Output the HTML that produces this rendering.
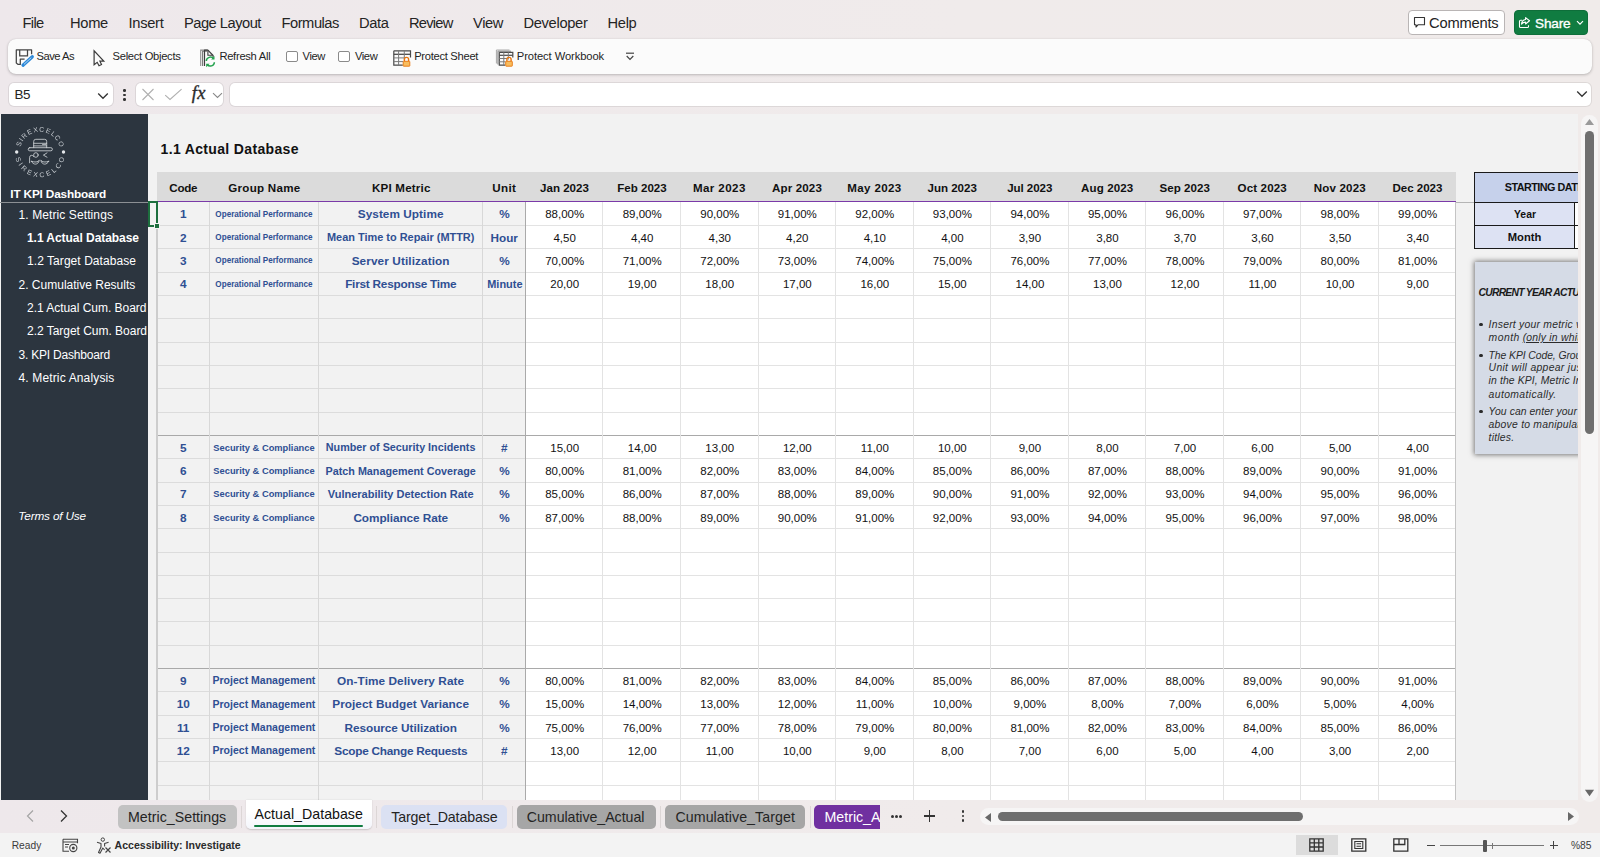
<!DOCTYPE html>
<html lang="en"><head><meta charset="utf-8"><title>IT KPI Dashboard - Actual Database</title>
<style>
*{margin:0;padding:0;box-sizing:content-box}
html,body{width:1600px;height:857px;overflow:hidden}
body{background:linear-gradient(90deg,#eee8eb,#f0ebeb 60%,#f0ebea);font-family:"Liberation Sans",sans-serif;position:relative;-webkit-font-smoothing:antialiased}
.t{position:absolute;white-space:nowrap;line-height:1;display:block}
.r{position:absolute}
.a{position:absolute;overflow:visible}
#sheet{position:absolute;left:0;top:114px;width:1577.800px;height:685.800px;background:#f2f2f2;overflow:hidden}
</style></head>
<body>
<span class="t" style="left:22.50px;top:16.00px;font-size:14.70px;color:#242424;letter-spacing:-0.672px;">File</span>
<span class="t" style="left:70.00px;top:16.00px;font-size:14.70px;color:#242424;letter-spacing:-0.303px;">Home</span>
<span class="t" style="left:128.50px;top:16.00px;font-size:14.70px;color:#242424;letter-spacing:-0.294px;">Insert</span>
<span class="t" style="left:184.00px;top:16.00px;font-size:14.70px;color:#242424;letter-spacing:-0.505px;">Page Layout</span>
<span class="t" style="left:281.50px;top:16.00px;font-size:14.70px;color:#242424;letter-spacing:-0.471px;">Formulas</span>
<span class="t" style="left:359.00px;top:16.00px;font-size:14.70px;color:#242424;letter-spacing:-0.388px;">Data</span>
<span class="t" style="left:409.00px;top:16.00px;font-size:14.70px;color:#242424;letter-spacing:-0.783px;">Review</span>
<span class="t" style="left:473.00px;top:16.00px;font-size:14.70px;color:#242424;letter-spacing:-0.400px;">View</span>
<span class="t" style="left:523.50px;top:16.00px;font-size:14.70px;color:#242424;letter-spacing:-0.334px;">Developer</span>
<span class="t" style="left:607.50px;top:16.00px;font-size:14.70px;color:#242424;letter-spacing:-0.308px;">Help</span>
<div class="r" style="left:1407.50px;top:10.00px;width:97.50px;height:25.00px;background:#ffffff;border:1px solid #b9b5b5;border-radius:4px;box-sizing:border-box;"></div>
<svg class="a" style="left:1413px;top:16px" width="13" height="13" viewBox="0 0 13 13"><path d="M1.5 1.5h10v7.2h-6.3l-2.2 2.3v-2.3h-1.5z" fill="none" stroke="#333" stroke-width="1.1" stroke-linejoin="round"/></svg>
<span class="t" style="left:1429.00px;top:16.00px;font-size:14.70px;color:#242424;letter-spacing:-0.196px;">Comments</span>
<div class="r" style="left:1513.50px;top:10.00px;width:74.50px;height:25.00px;background:#107c41;border-radius:4px;border:1px solid #0e6e3a;box-sizing:border-box;"></div>
<svg class="a" style="left:1518px;top:15.5px" width="13" height="13" viewBox="0 0 13 13"><path d="M4.2 4.2H2.6a1.1 1.1 0 0 0-1.1 1.1v5.1a1.1 1.1 0 0 0 1.1 1.1h6.8a1.1 1.1 0 0 0 1.1-1.1V9.2" fill="none" stroke="#fff" stroke-width="1.1"/><path d="M7.6 1.6l3.9 3.2-3.9 3.2V6.1c-2 0-3.2.6-4.1 2 .2-2.600 1.500-4.300 4.100-4.600z" fill="none" stroke="#fff" stroke-width="1.1" stroke-linejoin="round"/></svg>
<span class="t" style="left:1535.00px;top:17.00px;font-size:13.60px;color:#ffffff;letter-spacing:-0.159px;-webkit-text-stroke:0.35px #fff;">Share</span>
<svg class="a" style="left:1576px;top:20px" width="8" height="6" viewBox="0 0 8 6"><path d="M1 1.2l3 3 3-3" fill="none" stroke="#fff" stroke-width="1.2"/></svg>
<div class="r" style="left:8.00px;top:38.50px;width:1584.00px;height:35.00px;background:#fbfbfb;border-radius:8px;box-shadow:0 1px 3px rgba(0,0,0,.22),0 0 1px rgba(0,0,0,.15);"></div>
<svg class="a" style="left:15px;top:47.5px" width="20" height="20" viewBox="0 0 20 20">
<path d="M16.600 6.200V1.900H1.300V15.100L3.100 16.400H5.300V11.100H9.600" fill="none" stroke="#444" stroke-width="1.25" stroke-linejoin="round"/>
<path d="M4.700 1.900V7.800H12.500V1.900" fill="none" stroke="#444" stroke-width="1.250"/>
<path d="M8 17.200L17.300 8.700" fill="none" stroke="#2b88d8" stroke-width="3.200" stroke-linecap="round"/>
<path d="M9.200 16.100L16 9.900" fill="none" stroke="#d6ebfa" stroke-width=".8" stroke-linecap="round"/></svg>
<span class="t" style="left:36.60px;top:51.00px;font-size:11.20px;color:#242424;letter-spacing:-0.528px;">Save As</span>
<svg class="a" style="left:92px;top:49.500px" width="14" height="17" viewBox="0 0 14 17"><path d="M2.100 .8V14.700L5.200 12.300 7 15.700 9.500 14.500 7.900 11.200H11.800z" fill="#fbfbfb" stroke="#3a3a3a" stroke-width="1.200" stroke-linejoin="miter"/></svg>
<span class="t" style="left:112.60px;top:51.00px;font-size:11.20px;color:#242424;letter-spacing:-0.301px;">Select Objects</span>
<svg class="a" style="left:199px;top:47.500px" width="18" height="20" viewBox="0 0 18 20">
<path d="M1.700 17.900V2.100H8.600" fill="none" stroke="#8e8e8e" stroke-width="1.100"/>
<path d="M3.600 17.900V3.300H8" fill="none" stroke="#777" stroke-width="1.100"/>
<path d="M5.500 17.900V2.100H8.900L14.100 7.500V9" fill="none" stroke="#3d3d3d" stroke-width="1.200" stroke-linejoin="round"/>
<path d="M8.900 2.400V7.300H13.600" fill="none" stroke="#3d3d3d" stroke-width="1.100"/>
<path d="M7.300 13a4.100 4.100 0 0 1 7.300-2.300M15.400 14.200a4.100 4.100 0 0 1-7.300 2.300" fill="none" stroke="#23a24d" stroke-width="1.500"/>
<path d="M15.500 8v3.400h-3.400z" fill="#23a24d"/><path d="M7.200 19.200v-3.400h3.400z" fill="#23a24d"/></svg>
<span class="t" style="left:219.40px;top:51.00px;font-size:11.20px;color:#242424;letter-spacing:-0.287px;">Refresh All</span>
<div class="r" style="left:286.00px;top:50.50px;width:11.50px;height:11.50px;background:#fff;border:1px solid #8a8a8a;border-radius:2px;box-sizing:border-box;"></div>
<span class="t" style="left:302.60px;top:51.00px;font-size:11.20px;color:#242424;letter-spacing:-0.444px;">View</span>
<div class="r" style="left:338.40px;top:50.50px;width:11.50px;height:11.50px;background:#fff;border:1px solid #8a8a8a;border-radius:2px;box-sizing:border-box;"></div>
<span class="t" style="left:355.00px;top:51.00px;font-size:11.20px;color:#242424;letter-spacing:-0.444px;">View</span>
<svg class="a" style="left:392.5px;top:48.500px" width="19" height="19" viewBox="0 0 19 19"><path d="M.8 1.800H17.500V8.500M.8 1.800V16.200H9.800" fill="none" stroke="#4a4a4a" stroke-width="1.200"/>
<path d="M.8 5.300H17.500" fill="none" stroke="#4a4a4a" stroke-width="1.300"/>
<path d="M.8 8.900H12M.8 12.600H10M5.600 1.800V16.200M11.300 1.800V10.500" fill="none" stroke="#7a7a7a" stroke-width="1"/><path d="M11.4 12.500v-2a2.100 2.100 0 0 1 4.200 0v2" fill="none" stroke="#e8760f" stroke-width="1.400"/>
<rect x="10.2" y="12.300" width="6.600" height="4.900" rx=".5" fill="#f8bd5e" stroke="#e8760f" stroke-width=".9"/></svg>
<span class="t" style="left:414.20px;top:51.00px;font-size:11.20px;color:#242424;letter-spacing:-0.297px;">Protect Sheet</span>
<svg class="a" style="left:494.5px;top:48.500px" width="19" height="19" viewBox="0 0 19 19"><path d="M1.400 14.500V1H14.500" fill="none" stroke="#a8a8a8" stroke-width="1"/><path d="M2.900 15.500V2.200H16" fill="none" stroke="#8a8a8a" stroke-width="1"/>
<path d="M4.300 3.300H17.800V8.500M4.300 3.300V16.200H10.200" fill="none" stroke="#4a4a4a" stroke-width="1.200"/>
<path d="M4.300 6.300H17.800" fill="none" stroke="#4a4a4a" stroke-width="1.200"/>
<path d="M4.300 9.500H12.500M4.300 12.800H10.500M8.800 3.300V16.200M13.300 3.300V10.500" fill="none" stroke="#7a7a7a" stroke-width="1"/><path d="M11.9 12.500v-2a2.100 2.100 0 0 1 4.200 0v2" fill="none" stroke="#e8760f" stroke-width="1.400"/>
<rect x="10.7" y="12.300" width="6.600" height="4.900" rx=".5" fill="#f8bd5e" stroke="#e8760f" stroke-width=".9"/></svg>
<span class="t" style="left:516.80px;top:51.00px;font-size:11.20px;color:#242424;letter-spacing:-0.088px;">Protect Workbook</span>
<svg class="a" style="left:624.5px;top:52px" width="10" height="9" viewBox="0 0 10 9"><path d="M1 1.200h8" stroke="#444" stroke-width="1.200"/><path d="M1.700 4l3.300 3.300L8.300 4" fill="none" stroke="#444" stroke-width="1.200"/></svg>
<div class="r" style="left:9.30px;top:83.40px;width:103.60px;height:22.40px;background:#ffffff;border-radius:5px;box-shadow:0 0 0 1px rgba(0,0,0,.08);"></div>
<span class="t" style="left:14.60px;top:88.00px;font-size:13.40px;color:#242424;letter-spacing:-0.495px;">B5</span>
<svg class="a" style="left:97px;top:92px" width="12" height="8" viewBox="0 0 12 8"><path d="M1.200 1.500l4.800 4.800 4.800-4.800" fill="none" stroke="#333" stroke-width="1.300"/></svg>
<div class="r" style="left:123.30px;top:89.30px;width:2.50px;height:2.50px;background:#333;border-radius:50%;"></div>
<div class="r" style="left:123.30px;top:93.70px;width:2.50px;height:2.50px;background:#333;border-radius:50%;"></div>
<div class="r" style="left:123.30px;top:98.10px;width:2.50px;height:2.50px;background:#333;border-radius:50%;"></div>
<div class="r" style="left:136.30px;top:83.40px;width:86.90px;height:22.40px;background:#ffffff;border-radius:5px;box-shadow:0 0 0 1px rgba(0,0,0,.08);"></div>
<svg class="a" style="left:141px;top:88px" width="14" height="13" viewBox="0 0 14 13"><path d="M1.500 1l11 11M12.500 1l-11 11" stroke="#b0b0b0" stroke-width="1.100"/></svg>
<svg class="a" style="left:164px;top:88px" width="19" height="13" viewBox="0 0 19 13"><path d="M1.200 7.200l4.800 4.300L17.600 1.200" fill="none" stroke="#b0b0b0" stroke-width="1.100"/></svg>
<span class="t" style="left:191.80px;top:84.00px;font-size:18.50px;font-style:italic;color:#2b2b2b;font-family:'Liberation Serif',serif;-webkit-text-stroke:.35px #2b2b2b;letter-spacing:.4px;">fx</span>
<svg class="a" style="left:211.500px;top:92px" width="11" height="7" viewBox="0 0 11 7"><path d="M1 1.200l4.500 4.300L10 1.200" fill="none" stroke="#888" stroke-width="1.100"/></svg>
<div class="r" style="left:229.60px;top:83.40px;width:1361.00px;height:22.40px;background:#ffffff;border-radius:5px;box-shadow:0 0 0 1px rgba(0,0,0,.08);"></div>
<svg class="a" style="left:1575.500px;top:89.500px" width="12" height="8" viewBox="0 0 12 8"><path d="M1.200 1.500l4.800 4.800 4.800-4.800" fill="none" stroke="#333" stroke-width="1.300"/></svg>
<div id="sheet">
<div class="r" style="left:1.00px;top:0.00px;width:147.20px;height:686.00px;background:#2c353f;"></div>
<div class="r" style="left:0.00px;top:88.00px;width:149.00px;height:1.00px;background:#8c9094;"></div>
<svg class="a" style="left:9.700px;top:7.800px;will-change:transform" width="60" height="60" viewBox="-30 -30 60 60">
<defs><path id="arcT" d="M-19.65 -5.08A20.30 20.30 0 0 1 19.65 -5.08"/><path id="arcB" d="M-24.40 6.31A25.20 25.20 0 0 0 24.40 6.31"/></defs>
<g fill="#c8cdd2" font-family="'Liberation Sans',sans-serif" font-size="6.8">
<text letter-spacing="1.07"><textPath href="#arcT">SIREXCELCO</textPath></text>
<text letter-spacing="2.51"><textPath href="#arcB">SIREXCELCO</textPath></text></g>
<circle cx="-23.300" cy="0" r="1.700" fill="#e4e7ea"/><circle cx="23.500" cy="0" r="1.700" fill="#e4e7ea"/>
<g fill="none" stroke="#cdd2d6" stroke-width=".85" stroke-linecap="round" stroke-linejoin="round">
<path d="M-6.300 -4.300v-6.300a2.100 2.100 0 0 1 2.100-2.100h8.800a2.100 2.100 0 0 1 2.100 2.100v6.300"/>
<path d="M-6.300 -6.100h13M-6.300 -8.700h13M2.500 -7.400h3.200"/>
<rect x="-11.800" y="-4.300" width="24.200" height="3.100" rx="1.550"/>
<circle cx="-4.100" cy="3" r="2.300"/>
<path d="M-10.400 10.800V5.400a2.100 2.100 0 0 1 4-0.900"/>
<path d="M7 0.900L3.400 3.100l3.600 2.100"/>
<path d="M-8.600 9.300c1.800 4 6.800 4 7.900-1.100-1.300 2-4.400 2.400-7.900 1.100z"/>
<path d="M8.700 9.300c-1.800 4-6.800 4-7.900-1.100 1.300 2 4.400 2.400 7.900 1.100z"/>
</g></svg>
<span class="t" style="left:10.30px;top:75.00px;font-size:11.80px;font-weight:bold;color:#ffffff;letter-spacing:-0.166px;">IT KPI Dashboard</span>
<span class="t" style="left:18.50px;top:95.00px;font-size:12.00px;color:#ffffff;letter-spacing:0.100px;">1. Metric Settings</span>
<span class="t" style="left:27.00px;top:118.00px;font-size:12.00px;font-weight:bold;color:#ffffff;letter-spacing:-0.050px;">1.1 Actual Database</span>
<span class="t" style="left:27.00px;top:141.00px;font-size:12.00px;color:#ffffff;letter-spacing:0.060px;">1.2 Target Database</span>
<span class="t" style="left:18.50px;top:165.00px;font-size:12.00px;color:#ffffff;letter-spacing:0.004px;">2. Cumulative Results</span>
<span class="t" style="left:27.00px;top:188.00px;font-size:12.00px;color:#ffffff;letter-spacing:-0.032px;">2.1 Actual Cum. Board</span>
<span class="t" style="left:27.00px;top:211.00px;font-size:12.00px;color:#ffffff;letter-spacing:-0.024px;">2.2 Target Cum. Board</span>
<span class="t" style="left:18.50px;top:235.00px;font-size:12.00px;color:#ffffff;letter-spacing:-0.202px;">3. KPI Dashboard</span>
<span class="t" style="left:18.50px;top:258.00px;font-size:12.00px;color:#ffffff;letter-spacing:0.146px;">4. Metric Analysis</span>
<span class="t" style="left:18.30px;top:397.00px;font-size:11.80px;font-style:italic;color:#ffffff;letter-spacing:-0.169px;">Terms of Use</span>
<span class="t" style="left:160.60px;top:28.00px;font-size:14.00px;font-weight:bold;color:#111;letter-spacing:0.339px;">1.1 Actual Database</span>
<div class="r" style="left:157.40px;top:58.00px;width:1298.48px;height:29.30px;background:#dbdbdb;"></div>
<div class="r" style="left:157.40px;top:88.00px;width:367.90px;height:598.00px;background:#f2f2f2;"></div>
<div class="r" style="left:525.30px;top:88.00px;width:930.58px;height:598.00px;background:#ffffff;"></div>
<div class="r" style="left:157.40px;top:110.83px;width:367.90px;height:1.00px;background:#dcdcdc;"></div>
<div class="r" style="left:525.30px;top:110.83px;width:930.58px;height:1.00px;background:#e3e3e3;"></div>
<div class="r" style="left:157.40px;top:134.17px;width:367.90px;height:1.00px;background:#dcdcdc;"></div>
<div class="r" style="left:525.30px;top:134.17px;width:930.58px;height:1.00px;background:#e3e3e3;"></div>
<div class="r" style="left:157.40px;top:157.50px;width:367.90px;height:1.00px;background:#dcdcdc;"></div>
<div class="r" style="left:525.30px;top:157.50px;width:930.58px;height:1.00px;background:#e3e3e3;"></div>
<div class="r" style="left:157.40px;top:180.83px;width:367.90px;height:1.00px;background:#dcdcdc;"></div>
<div class="r" style="left:525.30px;top:180.83px;width:930.58px;height:1.00px;background:#e3e3e3;"></div>
<div class="r" style="left:157.40px;top:204.16px;width:367.90px;height:1.00px;background:#dcdcdc;"></div>
<div class="r" style="left:525.30px;top:204.16px;width:930.58px;height:1.00px;background:#e3e3e3;"></div>
<div class="r" style="left:157.40px;top:227.50px;width:367.90px;height:1.00px;background:#dcdcdc;"></div>
<div class="r" style="left:525.30px;top:227.50px;width:930.58px;height:1.00px;background:#e3e3e3;"></div>
<div class="r" style="left:157.40px;top:250.83px;width:367.90px;height:1.00px;background:#dcdcdc;"></div>
<div class="r" style="left:525.30px;top:250.83px;width:930.58px;height:1.00px;background:#e3e3e3;"></div>
<div class="r" style="left:157.40px;top:274.16px;width:367.90px;height:1.00px;background:#dcdcdc;"></div>
<div class="r" style="left:525.30px;top:274.16px;width:930.58px;height:1.00px;background:#e3e3e3;"></div>
<div class="r" style="left:157.40px;top:297.50px;width:367.90px;height:1.00px;background:#dcdcdc;"></div>
<div class="r" style="left:525.30px;top:297.50px;width:930.58px;height:1.00px;background:#e3e3e3;"></div>
<div class="r" style="left:157.40px;top:320.83px;width:1298.48px;height:1.00px;background:#a9a9a9;"></div>
<div class="r" style="left:157.40px;top:344.16px;width:367.90px;height:1.00px;background:#dcdcdc;"></div>
<div class="r" style="left:525.30px;top:344.16px;width:930.58px;height:1.00px;background:#e3e3e3;"></div>
<div class="r" style="left:157.40px;top:367.50px;width:367.90px;height:1.00px;background:#dcdcdc;"></div>
<div class="r" style="left:525.30px;top:367.50px;width:930.58px;height:1.00px;background:#e3e3e3;"></div>
<div class="r" style="left:157.40px;top:390.83px;width:367.90px;height:1.00px;background:#dcdcdc;"></div>
<div class="r" style="left:525.30px;top:390.83px;width:930.58px;height:1.00px;background:#e3e3e3;"></div>
<div class="r" style="left:157.40px;top:414.16px;width:367.90px;height:1.00px;background:#dcdcdc;"></div>
<div class="r" style="left:525.30px;top:414.16px;width:930.58px;height:1.00px;background:#e3e3e3;"></div>
<div class="r" style="left:157.40px;top:437.50px;width:367.90px;height:1.00px;background:#dcdcdc;"></div>
<div class="r" style="left:525.30px;top:437.50px;width:930.58px;height:1.00px;background:#e3e3e3;"></div>
<div class="r" style="left:157.40px;top:460.83px;width:367.90px;height:1.00px;background:#dcdcdc;"></div>
<div class="r" style="left:525.30px;top:460.83px;width:930.58px;height:1.00px;background:#e3e3e3;"></div>
<div class="r" style="left:157.40px;top:484.16px;width:367.90px;height:1.00px;background:#dcdcdc;"></div>
<div class="r" style="left:525.30px;top:484.16px;width:930.58px;height:1.00px;background:#e3e3e3;"></div>
<div class="r" style="left:157.40px;top:507.49px;width:367.90px;height:1.00px;background:#dcdcdc;"></div>
<div class="r" style="left:525.30px;top:507.49px;width:930.58px;height:1.00px;background:#e3e3e3;"></div>
<div class="r" style="left:157.40px;top:530.83px;width:367.90px;height:1.00px;background:#dcdcdc;"></div>
<div class="r" style="left:525.30px;top:530.83px;width:930.58px;height:1.00px;background:#e3e3e3;"></div>
<div class="r" style="left:157.40px;top:554.16px;width:1298.48px;height:1.00px;background:#a9a9a9;"></div>
<div class="r" style="left:157.40px;top:577.49px;width:367.90px;height:1.00px;background:#dcdcdc;"></div>
<div class="r" style="left:525.30px;top:577.49px;width:930.58px;height:1.00px;background:#e3e3e3;"></div>
<div class="r" style="left:157.40px;top:600.83px;width:367.90px;height:1.00px;background:#dcdcdc;"></div>
<div class="r" style="left:525.30px;top:600.83px;width:930.58px;height:1.00px;background:#e3e3e3;"></div>
<div class="r" style="left:157.40px;top:624.16px;width:367.90px;height:1.00px;background:#dcdcdc;"></div>
<div class="r" style="left:525.30px;top:624.16px;width:930.58px;height:1.00px;background:#e3e3e3;"></div>
<div class="r" style="left:157.40px;top:647.49px;width:367.90px;height:1.00px;background:#dcdcdc;"></div>
<div class="r" style="left:525.30px;top:647.49px;width:930.58px;height:1.00px;background:#e3e3e3;"></div>
<div class="r" style="left:157.40px;top:670.82px;width:367.90px;height:1.00px;background:#dcdcdc;"></div>
<div class="r" style="left:525.30px;top:670.82px;width:930.58px;height:1.00px;background:#e3e3e3;"></div>
<div class="r" style="left:156.20px;top:88.00px;width:1.80px;height:598.00px;background:#cdcdcd;"></div>
<div class="r" style="left:209.00px;top:88.00px;width:1.00px;height:598.00px;background:#d8d8d8;"></div>
<div class="r" style="left:317.80px;top:88.00px;width:1.00px;height:598.00px;background:#d8d8d8;"></div>
<div class="r" style="left:482.30px;top:88.00px;width:1.00px;height:598.00px;background:#d8d8d8;"></div>
<div class="r" style="left:524.80px;top:88.00px;width:1.00px;height:598.00px;background:#aaaaaa;"></div>
<div class="r" style="left:602.44px;top:88.00px;width:1.00px;height:598.00px;background:#e3e3e3;"></div>
<div class="r" style="left:679.98px;top:88.00px;width:1.00px;height:598.00px;background:#e3e3e3;"></div>
<div class="r" style="left:757.52px;top:88.00px;width:1.00px;height:598.00px;background:#e3e3e3;"></div>
<div class="r" style="left:835.06px;top:88.00px;width:1.00px;height:598.00px;background:#e3e3e3;"></div>
<div class="r" style="left:912.60px;top:88.00px;width:1.00px;height:598.00px;background:#e3e3e3;"></div>
<div class="r" style="left:990.14px;top:88.00px;width:1.00px;height:598.00px;background:#e3e3e3;"></div>
<div class="r" style="left:1067.68px;top:88.00px;width:1.00px;height:598.00px;background:#e3e3e3;"></div>
<div class="r" style="left:1145.22px;top:88.00px;width:1.00px;height:598.00px;background:#e3e3e3;"></div>
<div class="r" style="left:1222.76px;top:88.00px;width:1.00px;height:598.00px;background:#e3e3e3;"></div>
<div class="r" style="left:1300.30px;top:88.00px;width:1.00px;height:598.00px;background:#e3e3e3;"></div>
<div class="r" style="left:1377.84px;top:88.00px;width:1.00px;height:598.00px;background:#e3e3e3;"></div>
<div class="r" style="left:1455.38px;top:88.00px;width:1.00px;height:598.00px;background:#c4c4c4;"></div>
<div class="r" style="left:157.40px;top:86.90px;width:1298.48px;height:1.30px;background:#7a3aa8;"></div>
<div class="r" style="left:1455.88px;top:88.00px;width:18.52px;height:1.00px;background:#b5b5b5;"></div>
<span class="t" style="left:169.33px;top:68.00px;font-size:11.60px;font-weight:bold;color:#111;letter-spacing:-0.250px;">Code</span>
<span class="t" style="left:228.33px;top:68.00px;font-size:11.60px;font-weight:bold;color:#111;letter-spacing:0.249px;">Group Name</span>
<span class="t" style="left:371.90px;top:68.00px;font-size:11.60px;font-weight:bold;color:#111;letter-spacing:0.207px;">KPI Metric</span>
<span class="t" style="left:492.34px;top:68.00px;font-size:11.60px;font-weight:bold;color:#111;letter-spacing:0.313px;">Unit</span>
<span class="t" style="left:540.10px;top:69.00px;font-size:11.55px;font-weight:bold;color:#111;letter-spacing:-0.007px;">Jan 2023</span>
<span class="t" style="left:617.31px;top:69.00px;font-size:11.55px;font-weight:bold;color:#111;letter-spacing:-0.005px;">Feb 2023</span>
<span class="t" style="left:692.94px;top:69.00px;font-size:11.55px;font-weight:bold;color:#111;letter-spacing:0.420px;">Mar 2023</span>
<span class="t" style="left:772.01px;top:69.00px;font-size:11.55px;font-weight:bold;color:#111;letter-spacing:0.151px;">Apr 2023</span>
<span class="t" style="left:847.24px;top:69.00px;font-size:11.55px;font-weight:bold;color:#111;letter-spacing:0.378px;">May 2023</span>
<span class="t" style="left:927.47px;top:69.00px;font-size:11.55px;font-weight:bold;color:#111;letter-spacing:-0.005px;">Jun 2023</span>
<span class="t" style="left:1007.25px;top:69.00px;font-size:11.55px;font-weight:bold;color:#111;letter-spacing:-0.074px;">Jul 2023</span>
<span class="t" style="left:1081.10px;top:69.00px;font-size:11.55px;font-weight:bold;color:#111;letter-spacing:0.106px;">Aug 2023</span>
<span class="t" style="left:1159.46px;top:69.00px;font-size:11.55px;font-weight:bold;color:#111;letter-spacing:0.064px;">Sep 2023</span>
<span class="t" style="left:1237.55px;top:69.00px;font-size:11.55px;font-weight:bold;color:#111;letter-spacing:0.155px;">Oct 2023</span>
<span class="t" style="left:1313.68px;top:69.00px;font-size:11.55px;font-weight:bold;color:#111;letter-spacing:0.184px;">Nov 2023</span>
<span class="t" style="left:1392.42px;top:69.00px;font-size:11.55px;font-weight:bold;color:#111;letter-spacing:-0.012px;">Dec 2023</span>
<span class="t" style="left:179.92px;top:95.00px;font-size:11.80px;font-weight:bold;color:#2f4f93;">1</span>
<span class="t" style="left:215.37px;top:97.00px;font-size:8.14px;font-weight:bold;color:#2f4f93;">Operational Performance</span>
<span class="t" style="left:357.78px;top:95.00px;font-size:11.80px;font-weight:bold;color:#2f4f93;letter-spacing:0.042px;">System Uptime</span>
<span class="t" style="left:499.15px;top:95.00px;font-size:11.80px;font-weight:bold;color:#2f4f93;">%</span>
<span class="t" style="left:545.17px;top:95.00px;font-size:11.50px;color:#111111;">88,00%</span>
<span class="t" style="left:622.71px;top:95.00px;font-size:11.50px;color:#111111;">89,00%</span>
<span class="t" style="left:700.25px;top:95.00px;font-size:11.50px;color:#111111;">90,00%</span>
<span class="t" style="left:777.79px;top:95.00px;font-size:11.50px;color:#111111;">91,00%</span>
<span class="t" style="left:855.33px;top:95.00px;font-size:11.50px;color:#111111;">92,00%</span>
<span class="t" style="left:932.87px;top:95.00px;font-size:11.50px;color:#111111;">93,00%</span>
<span class="t" style="left:1010.41px;top:95.00px;font-size:11.50px;color:#111111;">94,00%</span>
<span class="t" style="left:1087.95px;top:95.00px;font-size:11.50px;color:#111111;">95,00%</span>
<span class="t" style="left:1165.49px;top:95.00px;font-size:11.50px;color:#111111;">96,00%</span>
<span class="t" style="left:1243.03px;top:95.00px;font-size:11.50px;color:#111111;">97,00%</span>
<span class="t" style="left:1320.57px;top:95.00px;font-size:11.50px;color:#111111;">98,00%</span>
<span class="t" style="left:1398.11px;top:95.00px;font-size:11.50px;color:#111111;">99,00%</span>
<span class="t" style="left:179.92px;top:119.00px;font-size:11.80px;font-weight:bold;color:#2f4f93;">2</span>
<span class="t" style="left:215.37px;top:120.00px;font-size:8.14px;font-weight:bold;color:#2f4f93;">Operational Performance</span>
<span class="t" style="left:326.95px;top:118.00px;font-size:10.94px;font-weight:bold;color:#2f4f93;">Mean Time to Repair (MTTR)</span>
<span class="t" style="left:490.51px;top:118.00px;font-size:11.74px;font-weight:bold;color:#2f4f93;">Hour</span>
<span class="t" style="left:553.48px;top:119.00px;font-size:11.50px;color:#111111;">4,50</span>
<span class="t" style="left:631.02px;top:119.00px;font-size:11.50px;color:#111111;">4,40</span>
<span class="t" style="left:708.56px;top:119.00px;font-size:11.50px;color:#111111;">4,30</span>
<span class="t" style="left:786.10px;top:119.00px;font-size:11.50px;color:#111111;">4,20</span>
<span class="t" style="left:863.64px;top:119.00px;font-size:11.50px;color:#111111;">4,10</span>
<span class="t" style="left:941.18px;top:119.00px;font-size:11.50px;color:#111111;">4,00</span>
<span class="t" style="left:1018.72px;top:119.00px;font-size:11.50px;color:#111111;">3,90</span>
<span class="t" style="left:1096.26px;top:119.00px;font-size:11.50px;color:#111111;">3,80</span>
<span class="t" style="left:1173.80px;top:119.00px;font-size:11.50px;color:#111111;">3,70</span>
<span class="t" style="left:1251.34px;top:119.00px;font-size:11.50px;color:#111111;">3,60</span>
<span class="t" style="left:1328.88px;top:119.00px;font-size:11.50px;color:#111111;">3,50</span>
<span class="t" style="left:1406.42px;top:119.00px;font-size:11.50px;color:#111111;">3,40</span>
<span class="t" style="left:179.92px;top:142.00px;font-size:11.80px;font-weight:bold;color:#2f4f93;">3</span>
<span class="t" style="left:215.37px;top:143.00px;font-size:8.14px;font-weight:bold;color:#2f4f93;">Operational Performance</span>
<span class="t" style="left:351.66px;top:142.00px;font-size:11.80px;font-weight:bold;color:#2f4f93;letter-spacing:0.089px;">Server Utilization</span>
<span class="t" style="left:499.15px;top:142.00px;font-size:11.80px;font-weight:bold;color:#2f4f93;">%</span>
<span class="t" style="left:545.17px;top:142.00px;font-size:11.50px;color:#111111;">70,00%</span>
<span class="t" style="left:622.71px;top:142.00px;font-size:11.50px;color:#111111;">71,00%</span>
<span class="t" style="left:700.25px;top:142.00px;font-size:11.50px;color:#111111;">72,00%</span>
<span class="t" style="left:777.79px;top:142.00px;font-size:11.50px;color:#111111;">73,00%</span>
<span class="t" style="left:855.33px;top:142.00px;font-size:11.50px;color:#111111;">74,00%</span>
<span class="t" style="left:932.87px;top:142.00px;font-size:11.50px;color:#111111;">75,00%</span>
<span class="t" style="left:1010.41px;top:142.00px;font-size:11.50px;color:#111111;">76,00%</span>
<span class="t" style="left:1087.95px;top:142.00px;font-size:11.50px;color:#111111;">77,00%</span>
<span class="t" style="left:1165.49px;top:142.00px;font-size:11.50px;color:#111111;">78,00%</span>
<span class="t" style="left:1243.03px;top:142.00px;font-size:11.50px;color:#111111;">79,00%</span>
<span class="t" style="left:1320.57px;top:142.00px;font-size:11.50px;color:#111111;">80,00%</span>
<span class="t" style="left:1398.11px;top:142.00px;font-size:11.50px;color:#111111;">81,00%</span>
<span class="t" style="left:179.92px;top:165.00px;font-size:11.80px;font-weight:bold;color:#2f4f93;">4</span>
<span class="t" style="left:215.37px;top:167.00px;font-size:8.14px;font-weight:bold;color:#2f4f93;">Operational Performance</span>
<span class="t" style="left:345.17px;top:165.00px;font-size:11.80px;font-weight:bold;color:#2f4f93;letter-spacing:-0.240px;">First Response Time</span>
<span class="t" style="left:487.24px;top:165.00px;font-size:10.96px;font-weight:bold;color:#2f4f93;">Minute</span>
<span class="t" style="left:550.28px;top:165.00px;font-size:11.50px;color:#111111;">20,00</span>
<span class="t" style="left:627.82px;top:165.00px;font-size:11.50px;color:#111111;">19,00</span>
<span class="t" style="left:705.36px;top:165.00px;font-size:11.50px;color:#111111;">18,00</span>
<span class="t" style="left:782.90px;top:165.00px;font-size:11.50px;color:#111111;">17,00</span>
<span class="t" style="left:860.44px;top:165.00px;font-size:11.50px;color:#111111;">16,00</span>
<span class="t" style="left:937.98px;top:165.00px;font-size:11.50px;color:#111111;">15,00</span>
<span class="t" style="left:1015.52px;top:165.00px;font-size:11.50px;color:#111111;">14,00</span>
<span class="t" style="left:1093.06px;top:165.00px;font-size:11.50px;color:#111111;">13,00</span>
<span class="t" style="left:1170.60px;top:165.00px;font-size:11.50px;color:#111111;">12,00</span>
<span class="t" style="left:1248.57px;top:165.00px;font-size:11.50px;color:#111111;">11,00</span>
<span class="t" style="left:1325.68px;top:165.00px;font-size:11.50px;color:#111111;">10,00</span>
<span class="t" style="left:1406.42px;top:165.00px;font-size:11.50px;color:#111111;">9,00</span>
<span class="t" style="left:179.92px;top:329.00px;font-size:11.80px;font-weight:bold;color:#2f4f93;">5</span>
<span class="t" style="left:213.35px;top:330.00px;font-size:9.30px;font-weight:bold;color:#2f4f93;">Security &amp; Compliance</span>
<span class="t" style="left:325.82px;top:328.00px;font-size:10.78px;font-weight:bold;color:#2f4f93;">Number of Security Incidents</span>
<span class="t" style="left:501.12px;top:329.00px;font-size:11.80px;font-weight:bold;color:#2f4f93;">#</span>
<span class="t" style="left:550.28px;top:329.00px;font-size:11.50px;color:#111111;">15,00</span>
<span class="t" style="left:627.82px;top:329.00px;font-size:11.50px;color:#111111;">14,00</span>
<span class="t" style="left:705.36px;top:329.00px;font-size:11.50px;color:#111111;">13,00</span>
<span class="t" style="left:782.90px;top:329.00px;font-size:11.50px;color:#111111;">12,00</span>
<span class="t" style="left:860.87px;top:329.00px;font-size:11.50px;color:#111111;">11,00</span>
<span class="t" style="left:937.98px;top:329.00px;font-size:11.50px;color:#111111;">10,00</span>
<span class="t" style="left:1018.72px;top:329.00px;font-size:11.50px;color:#111111;">9,00</span>
<span class="t" style="left:1096.26px;top:329.00px;font-size:11.50px;color:#111111;">8,00</span>
<span class="t" style="left:1173.80px;top:329.00px;font-size:11.50px;color:#111111;">7,00</span>
<span class="t" style="left:1251.34px;top:329.00px;font-size:11.50px;color:#111111;">6,00</span>
<span class="t" style="left:1328.88px;top:329.00px;font-size:11.50px;color:#111111;">5,00</span>
<span class="t" style="left:1406.42px;top:329.00px;font-size:11.50px;color:#111111;">4,00</span>
<span class="t" style="left:179.92px;top:352.00px;font-size:11.80px;font-weight:bold;color:#2f4f93;">6</span>
<span class="t" style="left:213.35px;top:353.00px;font-size:9.30px;font-weight:bold;color:#2f4f93;">Security &amp; Compliance</span>
<span class="t" style="left:325.58px;top:352.00px;font-size:10.77px;font-weight:bold;color:#2f4f93;">Patch Management Coverage</span>
<span class="t" style="left:499.15px;top:352.00px;font-size:11.80px;font-weight:bold;color:#2f4f93;">%</span>
<span class="t" style="left:545.17px;top:352.00px;font-size:11.50px;color:#111111;">80,00%</span>
<span class="t" style="left:622.71px;top:352.00px;font-size:11.50px;color:#111111;">81,00%</span>
<span class="t" style="left:700.25px;top:352.00px;font-size:11.50px;color:#111111;">82,00%</span>
<span class="t" style="left:777.79px;top:352.00px;font-size:11.50px;color:#111111;">83,00%</span>
<span class="t" style="left:855.33px;top:352.00px;font-size:11.50px;color:#111111;">84,00%</span>
<span class="t" style="left:932.87px;top:352.00px;font-size:11.50px;color:#111111;">85,00%</span>
<span class="t" style="left:1010.41px;top:352.00px;font-size:11.50px;color:#111111;">86,00%</span>
<span class="t" style="left:1087.95px;top:352.00px;font-size:11.50px;color:#111111;">87,00%</span>
<span class="t" style="left:1165.49px;top:352.00px;font-size:11.50px;color:#111111;">88,00%</span>
<span class="t" style="left:1243.03px;top:352.00px;font-size:11.50px;color:#111111;">89,00%</span>
<span class="t" style="left:1320.57px;top:352.00px;font-size:11.50px;color:#111111;">90,00%</span>
<span class="t" style="left:1398.11px;top:352.00px;font-size:11.50px;color:#111111;">91,00%</span>
<span class="t" style="left:179.92px;top:375.00px;font-size:11.80px;font-weight:bold;color:#2f4f93;">7</span>
<span class="t" style="left:213.35px;top:376.00px;font-size:9.30px;font-weight:bold;color:#2f4f93;">Security &amp; Compliance</span>
<span class="t" style="left:327.73px;top:375.00px;font-size:11.02px;font-weight:bold;color:#2f4f93;">Vulnerability Detection Rate</span>
<span class="t" style="left:499.15px;top:375.00px;font-size:11.80px;font-weight:bold;color:#2f4f93;">%</span>
<span class="t" style="left:545.17px;top:375.00px;font-size:11.50px;color:#111111;">85,00%</span>
<span class="t" style="left:622.71px;top:375.00px;font-size:11.50px;color:#111111;">86,00%</span>
<span class="t" style="left:700.25px;top:375.00px;font-size:11.50px;color:#111111;">87,00%</span>
<span class="t" style="left:777.79px;top:375.00px;font-size:11.50px;color:#111111;">88,00%</span>
<span class="t" style="left:855.33px;top:375.00px;font-size:11.50px;color:#111111;">89,00%</span>
<span class="t" style="left:932.87px;top:375.00px;font-size:11.50px;color:#111111;">90,00%</span>
<span class="t" style="left:1010.41px;top:375.00px;font-size:11.50px;color:#111111;">91,00%</span>
<span class="t" style="left:1087.95px;top:375.00px;font-size:11.50px;color:#111111;">92,00%</span>
<span class="t" style="left:1165.49px;top:375.00px;font-size:11.50px;color:#111111;">93,00%</span>
<span class="t" style="left:1243.03px;top:375.00px;font-size:11.50px;color:#111111;">94,00%</span>
<span class="t" style="left:1320.57px;top:375.00px;font-size:11.50px;color:#111111;">95,00%</span>
<span class="t" style="left:1398.11px;top:375.00px;font-size:11.50px;color:#111111;">96,00%</span>
<span class="t" style="left:179.92px;top:399.00px;font-size:11.80px;font-weight:bold;color:#2f4f93;">8</span>
<span class="t" style="left:213.35px;top:400.00px;font-size:9.30px;font-weight:bold;color:#2f4f93;">Security &amp; Compliance</span>
<span class="t" style="left:353.38px;top:399.00px;font-size:11.80px;font-weight:bold;color:#2f4f93;letter-spacing:-0.069px;">Compliance Rate</span>
<span class="t" style="left:499.15px;top:399.00px;font-size:11.80px;font-weight:bold;color:#2f4f93;">%</span>
<span class="t" style="left:545.17px;top:399.00px;font-size:11.50px;color:#111111;">87,00%</span>
<span class="t" style="left:622.71px;top:399.00px;font-size:11.50px;color:#111111;">88,00%</span>
<span class="t" style="left:700.25px;top:399.00px;font-size:11.50px;color:#111111;">89,00%</span>
<span class="t" style="left:777.79px;top:399.00px;font-size:11.50px;color:#111111;">90,00%</span>
<span class="t" style="left:855.33px;top:399.00px;font-size:11.50px;color:#111111;">91,00%</span>
<span class="t" style="left:932.87px;top:399.00px;font-size:11.50px;color:#111111;">92,00%</span>
<span class="t" style="left:1010.41px;top:399.00px;font-size:11.50px;color:#111111;">93,00%</span>
<span class="t" style="left:1087.95px;top:399.00px;font-size:11.50px;color:#111111;">94,00%</span>
<span class="t" style="left:1165.49px;top:399.00px;font-size:11.50px;color:#111111;">95,00%</span>
<span class="t" style="left:1243.03px;top:399.00px;font-size:11.50px;color:#111111;">96,00%</span>
<span class="t" style="left:1320.57px;top:399.00px;font-size:11.50px;color:#111111;">97,00%</span>
<span class="t" style="left:1398.11px;top:399.00px;font-size:11.50px;color:#111111;">98,00%</span>
<span class="t" style="left:179.92px;top:562.00px;font-size:11.80px;font-weight:bold;color:#2f4f93;">9</span>
<span class="t" style="left:212.51px;top:561.00px;font-size:10.53px;font-weight:bold;color:#2f4f93;">Project Management</span>
<span class="t" style="left:337.06px;top:562.00px;font-size:11.80px;font-weight:bold;color:#2f4f93;letter-spacing:0.071px;">On-Time Delivery Rate</span>
<span class="t" style="left:499.15px;top:562.00px;font-size:11.80px;font-weight:bold;color:#2f4f93;">%</span>
<span class="t" style="left:545.17px;top:562.00px;font-size:11.50px;color:#111111;">80,00%</span>
<span class="t" style="left:622.71px;top:562.00px;font-size:11.50px;color:#111111;">81,00%</span>
<span class="t" style="left:700.25px;top:562.00px;font-size:11.50px;color:#111111;">82,00%</span>
<span class="t" style="left:777.79px;top:562.00px;font-size:11.50px;color:#111111;">83,00%</span>
<span class="t" style="left:855.33px;top:562.00px;font-size:11.50px;color:#111111;">84,00%</span>
<span class="t" style="left:932.87px;top:562.00px;font-size:11.50px;color:#111111;">85,00%</span>
<span class="t" style="left:1010.41px;top:562.00px;font-size:11.50px;color:#111111;">86,00%</span>
<span class="t" style="left:1087.95px;top:562.00px;font-size:11.50px;color:#111111;">87,00%</span>
<span class="t" style="left:1165.49px;top:562.00px;font-size:11.50px;color:#111111;">88,00%</span>
<span class="t" style="left:1243.03px;top:562.00px;font-size:11.50px;color:#111111;">89,00%</span>
<span class="t" style="left:1320.57px;top:562.00px;font-size:11.50px;color:#111111;">90,00%</span>
<span class="t" style="left:1398.11px;top:562.00px;font-size:11.50px;color:#111111;">91,00%</span>
<span class="t" style="left:176.64px;top:585.00px;font-size:11.80px;font-weight:bold;color:#2f4f93;">10</span>
<span class="t" style="left:212.51px;top:585.00px;font-size:10.53px;font-weight:bold;color:#2f4f93;">Project Management</span>
<span class="t" style="left:332.22px;top:585.00px;font-size:11.80px;font-weight:bold;color:#2f4f93;letter-spacing:0.050px;">Project Budget Variance</span>
<span class="t" style="left:499.15px;top:585.00px;font-size:11.80px;font-weight:bold;color:#2f4f93;">%</span>
<span class="t" style="left:545.17px;top:585.00px;font-size:11.50px;color:#111111;">15,00%</span>
<span class="t" style="left:622.71px;top:585.00px;font-size:11.50px;color:#111111;">14,00%</span>
<span class="t" style="left:700.25px;top:585.00px;font-size:11.50px;color:#111111;">13,00%</span>
<span class="t" style="left:777.79px;top:585.00px;font-size:11.50px;color:#111111;">12,00%</span>
<span class="t" style="left:855.75px;top:585.00px;font-size:11.50px;color:#111111;">11,00%</span>
<span class="t" style="left:932.87px;top:585.00px;font-size:11.50px;color:#111111;">10,00%</span>
<span class="t" style="left:1013.61px;top:585.00px;font-size:11.50px;color:#111111;">9,00%</span>
<span class="t" style="left:1091.15px;top:585.00px;font-size:11.50px;color:#111111;">8,00%</span>
<span class="t" style="left:1168.69px;top:585.00px;font-size:11.50px;color:#111111;">7,00%</span>
<span class="t" style="left:1246.23px;top:585.00px;font-size:11.50px;color:#111111;">6,00%</span>
<span class="t" style="left:1323.77px;top:585.00px;font-size:11.50px;color:#111111;">5,00%</span>
<span class="t" style="left:1401.31px;top:585.00px;font-size:11.50px;color:#111111;">4,00%</span>
<span class="t" style="left:176.96px;top:609.00px;font-size:11.80px;font-weight:bold;color:#2f4f93;">11</span>
<span class="t" style="left:212.51px;top:608.00px;font-size:10.53px;font-weight:bold;color:#2f4f93;">Project Management</span>
<span class="t" style="left:344.47px;top:609.00px;font-size:11.80px;font-weight:bold;color:#2f4f93;letter-spacing:-0.047px;">Resource Utilization</span>
<span class="t" style="left:499.15px;top:609.00px;font-size:11.80px;font-weight:bold;color:#2f4f93;">%</span>
<span class="t" style="left:545.17px;top:609.00px;font-size:11.50px;color:#111111;">75,00%</span>
<span class="t" style="left:622.71px;top:609.00px;font-size:11.50px;color:#111111;">76,00%</span>
<span class="t" style="left:700.25px;top:609.00px;font-size:11.50px;color:#111111;">77,00%</span>
<span class="t" style="left:777.79px;top:609.00px;font-size:11.50px;color:#111111;">78,00%</span>
<span class="t" style="left:855.33px;top:609.00px;font-size:11.50px;color:#111111;">79,00%</span>
<span class="t" style="left:932.87px;top:609.00px;font-size:11.50px;color:#111111;">80,00%</span>
<span class="t" style="left:1010.41px;top:609.00px;font-size:11.50px;color:#111111;">81,00%</span>
<span class="t" style="left:1087.95px;top:609.00px;font-size:11.50px;color:#111111;">82,00%</span>
<span class="t" style="left:1165.49px;top:609.00px;font-size:11.50px;color:#111111;">83,00%</span>
<span class="t" style="left:1243.03px;top:609.00px;font-size:11.50px;color:#111111;">84,00%</span>
<span class="t" style="left:1320.57px;top:609.00px;font-size:11.50px;color:#111111;">85,00%</span>
<span class="t" style="left:1398.11px;top:609.00px;font-size:11.50px;color:#111111;">86,00%</span>
<span class="t" style="left:176.64px;top:632.00px;font-size:11.80px;font-weight:bold;color:#2f4f93;">12</span>
<span class="t" style="left:212.51px;top:631.00px;font-size:10.53px;font-weight:bold;color:#2f4f93;">Project Management</span>
<span class="t" style="left:334.33px;top:632.00px;font-size:11.80px;font-weight:bold;color:#2f4f93;letter-spacing:-0.255px;">Scope Change Requests</span>
<span class="t" style="left:501.12px;top:632.00px;font-size:11.80px;font-weight:bold;color:#2f4f93;">#</span>
<span class="t" style="left:550.28px;top:632.00px;font-size:11.50px;color:#111111;">13,00</span>
<span class="t" style="left:627.82px;top:632.00px;font-size:11.50px;color:#111111;">12,00</span>
<span class="t" style="left:705.79px;top:632.00px;font-size:11.50px;color:#111111;">11,00</span>
<span class="t" style="left:782.90px;top:632.00px;font-size:11.50px;color:#111111;">10,00</span>
<span class="t" style="left:863.64px;top:632.00px;font-size:11.50px;color:#111111;">9,00</span>
<span class="t" style="left:941.18px;top:632.00px;font-size:11.50px;color:#111111;">8,00</span>
<span class="t" style="left:1018.72px;top:632.00px;font-size:11.50px;color:#111111;">7,00</span>
<span class="t" style="left:1096.26px;top:632.00px;font-size:11.50px;color:#111111;">6,00</span>
<span class="t" style="left:1173.80px;top:632.00px;font-size:11.50px;color:#111111;">5,00</span>
<span class="t" style="left:1251.34px;top:632.00px;font-size:11.50px;color:#111111;">4,00</span>
<span class="t" style="left:1328.88px;top:632.00px;font-size:11.50px;color:#111111;">3,00</span>
<span class="t" style="left:1406.42px;top:632.00px;font-size:11.50px;color:#111111;">2,00</span>
<div class="r" style="left:148.40px;top:87.20px;width:9.60px;height:25.80px;border:2px solid #1d6f3e;box-sizing:border-box;background:#f2f2f2;"></div>
<div class="r" style="left:154.00px;top:108.60px;width:6.00px;height:6.00px;background:#1d6f3e;border:1px solid #f2f2f2;box-sizing:border-box;"></div>
<div class="r" style="left:1474.40px;top:58.00px;width:160.00px;height:30.50px;background:#c6d1eb;border:1px solid #1a1a1a;box-sizing:border-box;"></div>
<div class="r" style="left:1474.40px;top:87.80px;width:100.50px;height:24.20px;background:#dde2f3;border:1px solid #1a1a1a;box-sizing:border-box;"></div>
<div class="r" style="left:1474.40px;top:111.20px;width:100.50px;height:24.00px;background:#dde2f3;border:1px solid #1a1a1a;box-sizing:border-box;"></div>
<div class="r" style="left:1573.90px;top:87.80px;width:60.00px;height:24.20px;background:#ffffff;border:1px solid #1a1a1a;box-sizing:border-box;"></div>
<div class="r" style="left:1573.90px;top:111.20px;width:60.00px;height:24.00px;background:#ffffff;border:1px solid #1a1a1a;box-sizing:border-box;"></div>
<span class="t" style="left:1504.80px;top:68.00px;font-size:10.80px;font-weight:bold;color:#111;letter-spacing:-0.524px;">STARTING DATE</span>
<span class="t" style="left:1514.00px;top:96.00px;font-size:10.41px;font-weight:bold;color:#111;">Year</span>
<span class="t" style="left:1507.81px;top:118.00px;font-size:11.20px;font-weight:bold;color:#111;">Month</span>
<div class="r" style="left:1475.30px;top:148.30px;width:140.00px;height:191.40px;background:#d5dbe6;box-shadow:0 0 5px 1px rgba(0,0,0,.5);"></div>
<span class="t" style="left:1478.50px;top:174.00px;font-size:10.30px;font-weight:bold;font-style:italic;color:#1a1a1a;letter-spacing:-0.720px;">CURRENT YEAR ACTUAL VALUES</span>
<div class="r" style="left:1479.40px;top:208.90px;width:3.20px;height:3.20px;background:#2b2b2b;border-radius:50%;"></div>
<span class="t" style="left:1488.60px;top:206.00px;font-size:10.40px;font-style:italic;color:#2b2b2b;letter-spacing:0.230px;">Insert your metric values for each</span>
<span class="t" style="left:1488.60px;top:219.00px;font-size:10.40px;font-style:italic;color:#2b2b2b;letter-spacing:0.459px;">month</span>
<span class="t" style="left:1522.70px;top:219.00px;font-size:10.40px;font-style:italic;color:#2b2b2b;letter-spacing:0.208px;text-decoration:underline;">(only in white cells)</span>
<div class="r" style="left:1479.40px;top:239.50px;width:3.20px;height:3.20px;background:#2b2b2b;border-radius:50%;"></div>
<span class="t" style="left:1488.60px;top:237.00px;font-size:10.40px;font-style:italic;color:#2b2b2b;letter-spacing:-0.085px;">The KPI Code, Group Name, Metric and</span>
<span class="t" style="left:1488.60px;top:249.00px;font-size:10.40px;font-style:italic;color:#2b2b2b;letter-spacing:0.311px;">Unit will appear just after you fill</span>
<span class="t" style="left:1488.60px;top:262.00px;font-size:10.40px;font-style:italic;color:#2b2b2b;letter-spacing:0.112px;">in the KPI, Metric Info section</span>
<span class="t" style="left:1488.60px;top:276.00px;font-size:10.40px;font-style:italic;color:#2b2b2b;letter-spacing:0.371px;">automatically.</span>
<div class="r" style="left:1479.40px;top:296.00px;width:3.20px;height:3.20px;background:#2b2b2b;border-radius:50%;"></div>
<span class="t" style="left:1488.60px;top:293.00px;font-size:10.40px;font-style:italic;color:#2b2b2b;letter-spacing:0.061px;">You can enter your starting date</span>
<span class="t" style="left:1488.60px;top:306.00px;font-size:10.40px;font-style:italic;color:#2b2b2b;letter-spacing:0.224px;">above to manipulate the month</span>
<span class="t" style="left:1488.60px;top:319.00px;font-size:10.40px;font-style:italic;color:#2b2b2b;letter-spacing:0.204px;">titles.</span>
</div>
<div class="r" style="left:1580.80px;top:114.50px;width:17.60px;height:687.30px;background:#f6f5f5;border-radius:8.800px;"></div>
<svg class="a" style="left:1584px;top:118px" width="11" height="8" viewBox="0 0 11 8"><path d="M5.500 1L10 7H1z" fill="#9a9a9a"/></svg>
<div class="r" style="left:1585.30px;top:130.80px;width:8.70px;height:303.20px;background:#6e6e6e;border-radius:4.500px;"></div>
<svg class="a" style="left:1584.100px;top:789px" width="11" height="8" viewBox="0 0 11 8"><path d="M5.500 7.300L10.100 .8H.9z" fill="#686868"/></svg>
<svg class="a" style="left:25px;top:809px" width="10" height="14" viewBox="0 0 10 14"><path d="M8 1.500L2.500 7 8 12.500" fill="none" stroke="#a5a5a5" stroke-width="1.200"/></svg>
<svg class="a" style="left:58.500px;top:809px" width="10" height="14" viewBox="0 0 10 14"><path d="M2 1.500L7.500 7 2 12.500" fill="none" stroke="#333" stroke-width="1.300"/></svg>
<div class="r" style="left:117.50px;top:804.50px;width:119.00px;height:24.50px;background:#c2c2c2;border-radius:5px;"></div>
<span class="t" style="left:128.00px;top:810.00px;font-size:14.20px;color:#242424;letter-spacing:0.029px;">Metric_Settings</span>
<div class="r" style="left:241.30px;top:806.00px;width:1.00px;height:22.00px;background:#dcd6d6;"></div>
<div class="r" style="left:246.00px;top:799.50px;width:126.00px;height:29.50px;background:linear-gradient(#ffffff 40%,#f3f5fb);border-radius:0 0 5px 5px;box-shadow:0 .5px 1.500px rgba(0,0,0,.16);"></div>
<span class="t" style="left:254.50px;top:807.00px;font-size:14.20px;color:#111;letter-spacing:0.023px;">Actual_Database</span>
<div class="r" style="left:254.00px;top:824.70px;width:109.00px;height:2.20px;background:#107c41;border-radius:1px;"></div>
<div class="r" style="left:376.30px;top:806.00px;width:1.00px;height:22.00px;background:#dcd6d6;"></div>
<div class="r" style="left:381.30px;top:804.50px;width:125.70px;height:24.50px;background:#dbe1f3;border-radius:5px;"></div>
<span class="t" style="left:391.30px;top:810.00px;font-size:14.20px;color:#242424;letter-spacing:-0.130px;">Target_Database</span>
<div class="r" style="left:511.70px;top:806.00px;width:1.00px;height:22.00px;background:#dcd6d6;"></div>
<div class="r" style="left:517.00px;top:804.50px;width:138.80px;height:24.50px;background:#a6a6a6;border-radius:5px;"></div>
<span class="t" style="left:526.80px;top:810.00px;font-size:14.20px;color:#242424;letter-spacing:-0.041px;">Cumulative_Actual</span>
<div class="r" style="left:660.00px;top:806.00px;width:1.00px;height:22.00px;background:#dcd6d6;"></div>
<div class="r" style="left:665.00px;top:804.50px;width:140.00px;height:24.50px;background:#a6a6a6;border-radius:5px;"></div>
<span class="t" style="left:675.50px;top:810.00px;font-size:14.20px;color:#242424;letter-spacing:0.065px;">Cumulative_Target</span>
<div class="r" style="left:809.50px;top:806.00px;width:1.00px;height:22.00px;background:#dcd6d6;"></div>
<div class="r" style="left:814px;top:804.500px;width:66px;height:24.500px;background:#7030a0;border-radius:5px 0 0 5px;overflow:hidden;">
<span class="t" style="left:10.50px;top:5.50px;font-size:14.20px;color:#fff;">Metric_Analysis</span>
</div>
<div class="r" style="left:890.80px;top:814.50px;width:3.00px;height:3.00px;background:#333;border-radius:50%;"></div>
<div class="r" style="left:895.00px;top:814.50px;width:3.00px;height:3.00px;background:#333;border-radius:50%;"></div>
<div class="r" style="left:899.20px;top:814.50px;width:3.00px;height:3.00px;background:#333;border-radius:50%;"></div>
<div class="r" style="left:923.50px;top:815.40px;width:11.50px;height:1.20px;background:#333;"></div>
<div class="r" style="left:928.65px;top:810.25px;width:1.20px;height:11.50px;background:#333;"></div>
<div class="r" style="left:961.80px;top:810.30px;width:2.60px;height:2.60px;background:#333;border-radius:50%;"></div>
<div class="r" style="left:961.80px;top:814.80px;width:2.60px;height:2.60px;background:#333;border-radius:50%;"></div>
<div class="r" style="left:961.80px;top:819.30px;width:2.60px;height:2.60px;background:#333;border-radius:50%;"></div>
<div class="r" style="left:980.00px;top:808.10px;width:599.00px;height:17.00px;background:#f6f5f5;border-radius:8.500px;"></div>
<svg class="a" style="left:984px;top:811.500px" width="8" height="11" viewBox="0 0 8 11"><path d="M1 5.500L7 1v9z" fill="#686868"/></svg>
<div class="r" style="left:997.50px;top:812.00px;width:305.50px;height:9.30px;background:#6e6e6e;border-radius:4.650px;"></div>
<svg class="a" style="left:1566.500px;top:811px" width="8" height="11" viewBox="0 0 8 11"><path d="M7 5.500L1 1v9z" fill="#686868"/></svg>
<div class="r" style="left:0.00px;top:833.00px;width:1600.00px;height:24.00px;background:#f3f3f3;"></div>
<span class="t" style="left:11.75px;top:841.00px;font-size:10.21px;color:#3b3b3b;">Ready</span>
<svg class="a" style="left:62px;top:838px" width="17" height="15" viewBox="0 0 17 15"><path d="M1 1.200h14.500v4M1 1.200v12h6M1 4h14.500M3 6.500h4M3 9h3" fill="none" stroke="#444" stroke-width="1.100"/><circle cx="11.300" cy="10" r="3.600" fill="none" stroke="#444" stroke-width="1.100"/><circle cx="11.300" cy="10" r="1.500" fill="#444"/></svg>
<svg class="a" style="left:95.500px;top:837px" width="16" height="17" viewBox="0 0 16 17"><circle cx="6.800" cy="2.600" r="1.700" fill="none" stroke="#444" stroke-width="1"/><path d="M1 5.200l4 1.300v3.500l-2.500 5.500 1.500.7 2.800-5.200 1.800 2M12.600 5.200l-4 1.300v3" fill="none" stroke="#444" stroke-width="1.100" stroke-linejoin="round"/><path d="M9.500 10.500l5 5M14.500 10.500l-5 5" stroke="#444" stroke-width="1.200"/></svg>
<span class="t" style="left:114.50px;top:840.00px;font-size:10.57px;font-weight:bold;color:#2b2b2b;">Accessibility: Investigate</span>
<div class="r" style="left:1296.00px;top:834.60px;width:41.60px;height:20.60px;background:#dcdcdc;"></div>
<svg class="a" style="left:1309px;top:838px" width="15" height="14" viewBox="0 0 15 14"><path d="M.8.800h13.400v12.400H.8zM.8 4.900h13.400M.8 9h13.400M5.300.8v12.400M9.800.8v12.400" fill="none" stroke="#333" stroke-width="1.300"/></svg>
<svg class="a" style="left:1351px;top:838px" width="16" height="14" viewBox="0 0 16 14"><path d="M.8.800h14v12.400H.8z" fill="none" stroke="#333" stroke-width="1.300"/><path d="M3.800 3.500h8v7h-8zM5.500 5.700h4.600M5.500 8.200h4.600" fill="none" stroke="#333" stroke-width="1.100"/></svg>
<svg class="a" style="left:1392.500px;top:838px" width="16" height="14" viewBox="0 0 16 14"><path d="M.8.800h14v12.400H.8zM.8 6.500h11V.8M6 .8v5.700" fill="none" stroke="#333" stroke-width="1.300"/></svg>
<div class="r" style="left:1427.00px;top:844.70px;width:7.50px;height:1.20px;background:#444;"></div>
<div class="r" style="left:1440.00px;top:845.00px;width:104.00px;height:1.00px;background:#777;"></div>
<div class="r" style="left:1482.50px;top:839.50px;width:4.00px;height:12.00px;background:#555;border-radius:1px;"></div>
<div class="r" style="left:1492.00px;top:842.50px;width:1.00px;height:6.00px;background:#777;"></div>
<div class="r" style="left:1549.50px;top:844.70px;width:8.00px;height:1.20px;background:#444;"></div>
<div class="r" style="left:1552.90px;top:841.30px;width:1.20px;height:8.00px;background:#444;"></div>
<span class="t" style="left:1571.00px;top:841.00px;font-size:10.24px;color:#3b3b3b;">%85</span>
</body></html>
